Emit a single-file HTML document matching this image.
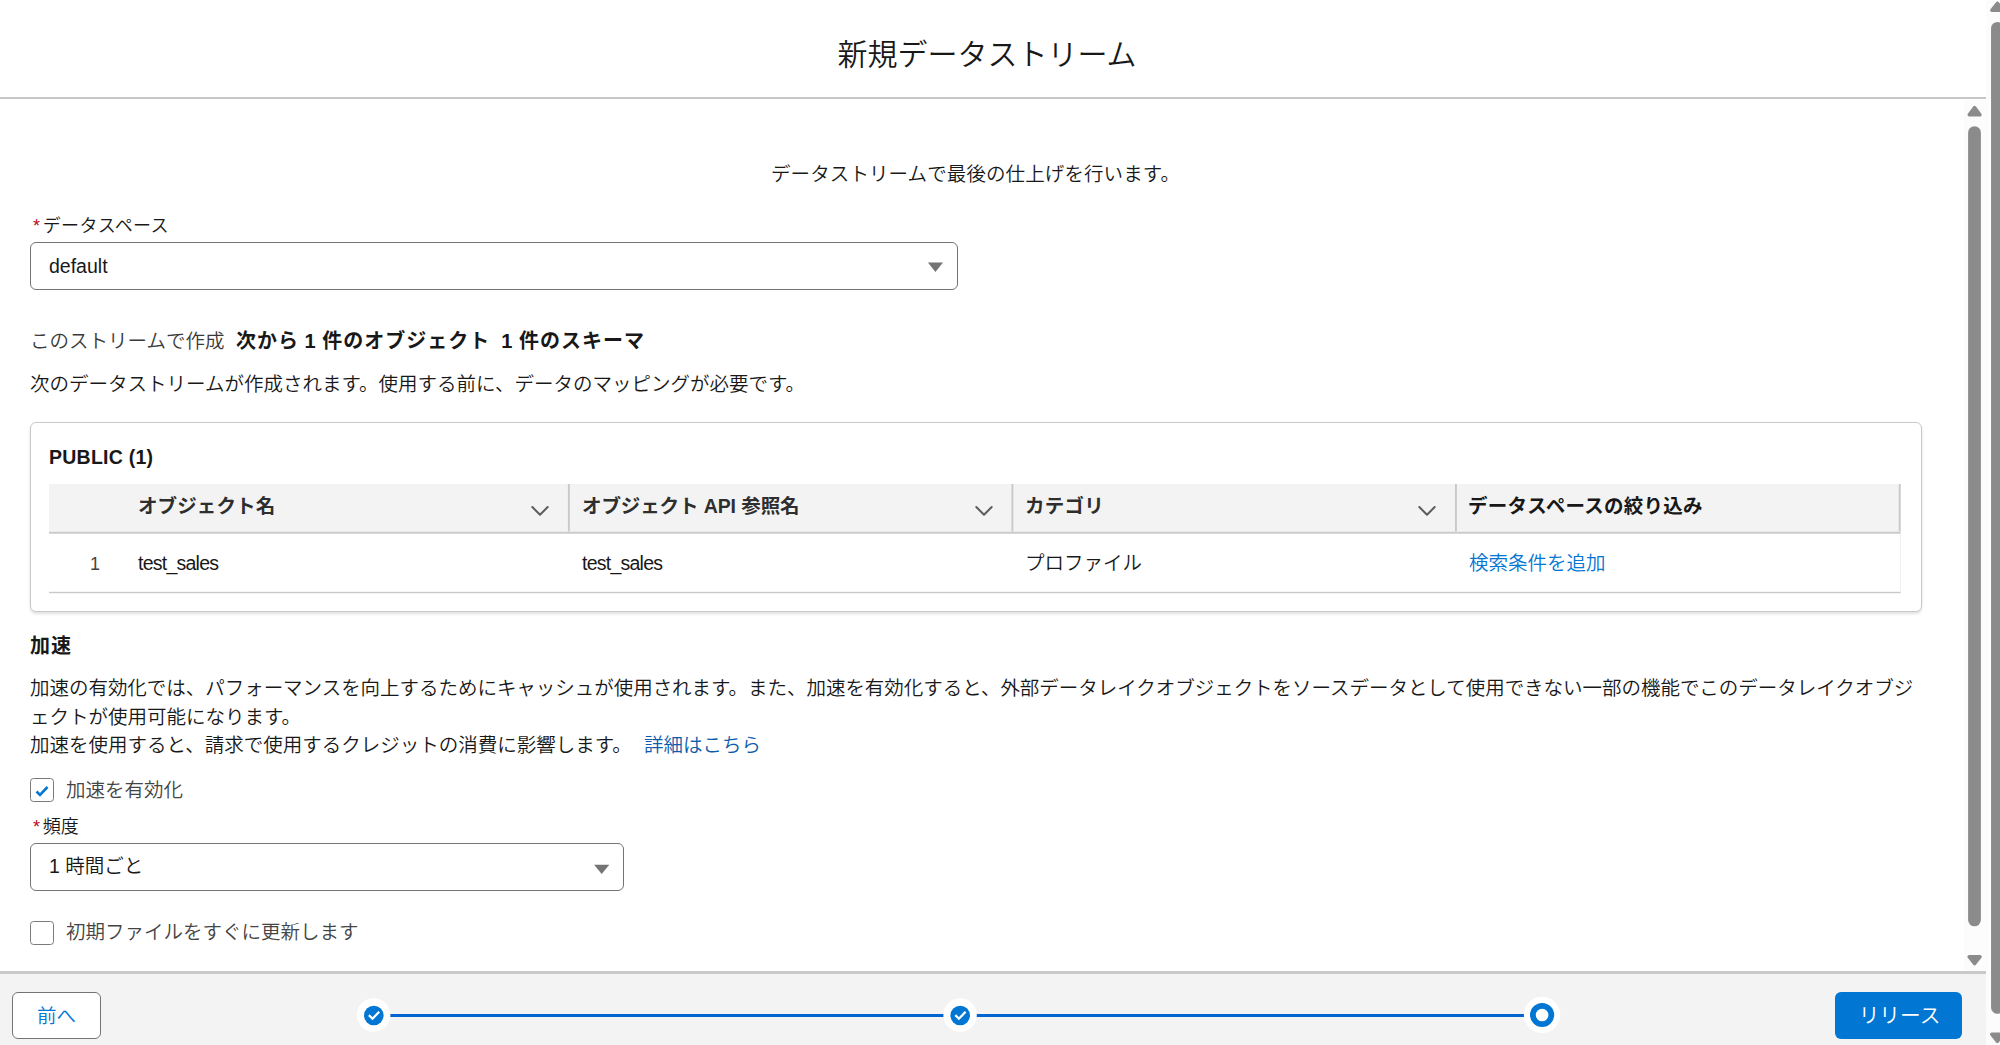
<!DOCTYPE html>
<html lang="ja">
<head>
<meta charset="utf-8">
<title>新規データストリーム</title>
<style>
*{box-sizing:border-box;margin:0;padding:0}
html,body{width:2000px;height:1045px;overflow:hidden;background:#fff}
body{position:relative;font-family:"Liberation Sans","Noto Sans CJK JP",sans-serif;color:#181818;font-size:19.5px}
.abs{position:absolute;white-space:nowrap;line-height:1}
.t{position:absolute;white-space:nowrap;line-height:30px;height:30px;font-weight:350;margin-top:1px}
.b{font-weight:700 !important}
.link{color:#0b5cab}
/* header */
#hdr{position:absolute;left:0;top:0;width:1986px;height:99px;background:#fff;border-bottom:2px solid #c6c6c6}
#title{left:837.5px;top:38.5px;font-weight:350;font-size:30px;line-height:32px;height:32px}
/* select */
.sel{position:absolute;border:1.5px solid #747474;border-radius:6px;background:#fff}
.tri{position:absolute;width:0;height:0;border-left:8px solid transparent;border-right:8px solid transparent;border-top:9px solid #747474}
/* card */
#card{position:absolute;left:30px;top:422px;width:1892px;height:190px;border:1px solid #c9c9c9;border-radius:6px;background:#fff;box-shadow:0 2px 3px rgba(0,0,0,.12)}
#thead{position:absolute;left:49px;top:484px;width:1851.6px;height:48px;background:#f3f3f3}
.vsep{position:absolute;top:484px;width:1.5px;height:48px;background:#c9c9c9;margin-left:1px}
.hline{position:absolute;height:1.5px;background:#c9c9c9}
.chev{position:absolute;width:20px;height:12px}
/* checkbox */
.cb{position:absolute;width:24px;height:24px;border:1.5px solid #7a7a7a;border-radius:3.5px;background:#fff}
/* footer */
#ftr{position:absolute;left:0;top:971px;width:1986px;height:74px;background:#f3f3f3;border-top:3px solid #c9c9c9}
.btn{position:absolute;top:992px;height:47px;border-radius:6px;text-align:center}
/* scrollbars */
.sb{position:absolute;background:#fafafa}
.thumb{position:absolute;background:#8b8b8b;border-radius:7px}
</style>
</head>
<body>

<div id="hdr"></div>
<div id="title" class="abs">新規データストリーム</div>

<div class="t" id="sub" style="left:771px;top:158px;letter-spacing:0.1px">データストリームで最後の仕上げを行います。</div>

<div class="t" id="lab1" style="left:33px;top:210px;font-size:18px"><span style="color:#ba0517">*</span><span id="lab1t" style="margin-left:2.8px;letter-spacing:0.3px">データスペース</span></div>
<div class="sel" style="left:30px;top:242px;width:928px;height:48px"></div>
<div class="t" id="sel1t" style="left:49px;top:250px">default</div>
<svg class="abs" style="left:920px;top:255px;width:30px;height:24px" viewBox="920 255 30 24"><path d="M927.9 262.6 L943 262.6 L935.45 272.1 Z" fill="#747474"/></svg>

<div class="t" id="l1a" style="left:30px;top:325px;color:#3a3a3a">このストリームで作成</div>
<div class="t b" id="l1b" style="left:236px;top:325px;font-size:20px;letter-spacing:1px;word-spacing:-1px">次から 1 件のオブジェクト&nbsp; 1 件のスキーマ</div>
<div class="t" id="l2" style="left:30px;top:368px">次のデータストリームが作成されます。使用する前に、データのマッピングが必要です。</div>

<div id="card"></div>
<div class="t b" id="pub" style="margin-top:0;left:49px;top:442px;font-size:19.5px;letter-spacing:0.25px">PUBLIC (1)</div>
<div id="thead"></div>

<svg class="abs" style="left:0;top:470px;width:1986px;height:140px" viewBox="0 470 1986 140">
<g fill="#c9c9c9">
<rect x="567.9" y="484" width="1.9" height="47.4"/>
<rect x="1011.45" y="484" width="1.9" height="47.4"/>
<rect x="1455" y="484" width="1.9" height="47.4"/>
<rect x="1898.75" y="484" width="1.9" height="47.4"/>
<rect x="49" y="531.8" width="1851.65" height="1.9"/>
<rect x="49" y="591.8" width="1851.65" height="1.4" fill="#c9c9c9"/>
<rect x="1899.9" y="534" width="0.8" height="58" fill="#ececec"/>
</g></svg>
<div class="t" id="h1" style="color:#2e2e2e;font-weight:700 !important;letter-spacing:0.12px;margin-top:0;left:138px;top:491px">オブジェクト名</div>
<div class="t" id="h2" style="color:#2e2e2e;font-weight:700 !important;letter-spacing:-0.1px;margin-top:0;left:582px;top:491px">オブジェクト API 参照名</div>
<div class="t" id="h3" style="color:#2e2e2e;font-weight:700 !important;letter-spacing:0.25px;margin-top:0;left:1025px;top:491px">カテゴリ</div>
<div class="t" id="h4" style="color:#181818;font-weight:700 !important;letter-spacing:0.25px;margin-top:0;left:1468px;top:491px">データスペースの絞り込み</div>
<svg class="chev" style="left:530px;top:505px" viewBox="0 0 20 12"><path d="M2.3 2 L10 9.7 L17.7 2" fill="none" stroke="#5c5c5c" stroke-width="2" stroke-linecap="round" stroke-linejoin="round"/></svg>
<svg class="chev" style="left:974px;top:505px" viewBox="0 0 20 12"><path d="M2.3 2 L10 9.7 L17.7 2" fill="none" stroke="#5c5c5c" stroke-width="2" stroke-linecap="round" stroke-linejoin="round"/></svg>
<svg class="chev" style="left:1417px;top:505px" viewBox="0 0 20 12"><path d="M2.3 2 L10 9.7 L17.7 2" fill="none" stroke="#5c5c5c" stroke-width="2" stroke-linecap="round" stroke-linejoin="round"/></svg>

<div class="t" id="r0" style="margin-top:0.2px;left:90px;top:549px;font-size:18px;color:#444">1</div>
<div class="t" id="r1" style="margin-top:0.2px;left:138px;top:548px;letter-spacing:-0.75px">test_sales</div>
<div class="t" id="r2" style="margin-top:0.2px;left:582px;top:548px;letter-spacing:-0.75px">test_sales</div>
<div class="t" id="r3" style="margin-top:0.2px;left:1025px;top:548px">プロファイル</div>
<div class="t" id="r4" style="color:#0176d3;margin-top:0.2px;left:1469px;top:548px">検索条件を追加</div>

<div class="t b" id="acc" style="margin-top:0;left:30px;top:631px;font-size:20px;letter-spacing:1px">加速</div>
<div class="t" id="p1" style="margin-top:0;left:30px;top:673px;letter-spacing:-0.03px">加速の有効化では、パフォーマンスを向上するためにキャッシュが使用されます。また、加速を有効化すると、外部データレイクオブジェクトをソースデータとして使用できない一部の機能でこのデータレイクオブジ</div>
<div class="t" id="p2" style="margin-top:0;left:30px;top:702px">ェクトが使用可能になります。</div>
<div class="t" id="p3" style="margin-top:0;left:30px;top:730px">加速を使用すると、請求で使用するクレジットの消費に影響します。</div>
<div class="t link" id="p4" style="margin-top:0;left:644px;top:730px">詳細はこちら</div>

<div class="cb" style="left:30px;top:778px"></div>
<svg class="abs" style="left:35px;top:785px;width:14px;height:12px" viewBox="0 0 14 12"><path d="M1.5 6.5 L5 10 L12.5 2" fill="none" stroke="#0176d3" stroke-width="2.6"/></svg>
<div class="t" id="cb1t" style="margin-top:0;left:66px;top:775px;color:#444">加速を有効化</div>

<div class="t" id="lab2" style="left:33px;top:811px;font-size:18px"><span style="color:#ba0517">*</span><span id="lab2t" style="margin-left:2.8px">頻度</span></div>
<div class="sel" style="left:30px;top:843px;width:594px;height:48px"></div>
<div class="t" id="sel2t" style="margin-top:0;left:49px;top:851px">1 時間ごと</div>
<svg class="abs" style="left:586px;top:856px;width:30px;height:24px" viewBox="586 856 30 24"><path d="M594.1 864.7 L609.3 864.7 L601.7 874.1 Z" fill="#747474"/></svg>

<div class="cb" style="left:30px;top:921px"></div>
<div class="t" id="cb2t" style="margin-top:0;left:66px;top:917px;color:#444">初期ファイルをすぐに更新します</div>

<div id="ftr"></div>
<div class="btn" id="prev" style="left:12px;width:89px;background:#fff;border:1.5px solid #747474;color:#0176d3;line-height:46px;font-weight:350">前へ</div>
<div class="btn" id="rel" style="left:1835px;width:127px;background:#0176d3;color:#fff;line-height:47px;font-size:20.7px;padding-left:2px;font-weight:350">リリース</div>

<!-- progress -->
<svg class="abs" style="left:340px;top:990px;width:1240px;height:50px" viewBox="340 990 1240 50">
<rect x="374" y="1014" width="1168" height="3" fill="#0164d0"/>
<circle cx="373.6" cy="1015" r="16.8" fill="#fff"/>
<circle cx="960.1" cy="1015" r="16.7" fill="#fff"/>
<circle cx="1542.1" cy="1014.9" r="18.2" fill="#fff"/>
<circle cx="373.8" cy="1015.5" r="9.8" fill="#0176d3"/>
<circle cx="960.2" cy="1015.5" r="9.8" fill="#0176d3"/>
<circle cx="1542.1" cy="1015" r="9.2" fill="none" stroke="#0176d3" stroke-width="5.8"/>
<path d="M368.9 1015.1 L372.5 1018.7 L379.2 1011.8" fill="none" stroke="#fff" stroke-width="2.3"/>
<path d="M955.3 1015.1 L958.9 1018.7 L965.6 1011.8" fill="none" stroke="#fff" stroke-width="2.3"/>
</svg>

<!-- scrollbars -->
<div class="sb" style="left:1964px;top:100px;width:25px;height:871px;background:#fcfcfc"></div>
<div class="sb" style="left:1986px;top:0;width:14px;height:100px;background:#fcfcfc"></div>
<div class="sb" style="left:1986px;top:971px;width:14px;height:74px;background:#fcfcfc"></div>
<svg class="abs" style="left:1960px;top:0;width:40px;height:1045px" viewBox="1960 0 40 1045">
<g fill="#8b8b8b" stroke="#8b8b8b" stroke-width="3.4" stroke-linejoin="round">
<path d="M1974.60 107.50 L1980.00 114.80 L1969.20 114.80 Z"/>
<path d="M1974.60 963.70 L1980.10 956.80 L1969.10 956.80 Z"/>
<path d="M1997.40 3.20 L2003.00 10.20 L1991.80 10.20 Z"/>
<path d="M1997.40 1041.40 L2003.10 1034.20 L1991.70 1034.20 Z"/>
</g>
<rect x="1968.1" y="126.25" width="12.8" height="800" rx="6.4" fill="#8b8b8b"/>
<rect x="1991.05" y="22" width="12.8" height="991.8" rx="6.4" fill="#8b8b8b"/>
</svg>

</body>
</html>
